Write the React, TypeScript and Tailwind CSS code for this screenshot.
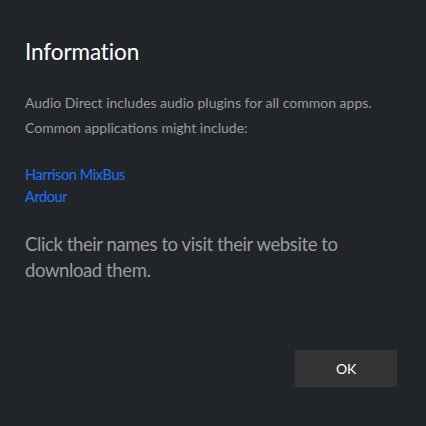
export default function App() {
  return (
    <div className="flex h-[426px] w-[426px] flex-col bg-[#212529] px-[25px] font-['Lato',sans-serif]">
      <h1 className="mt-[36px] text-[22.5px] leading-[32px] tracking-[-0.1px] text-white">Information</h1>
      <p className="mt-[22px] text-[14px] leading-[25px] text-[#9b9b9b]">
        Audio Direct includes audio plugins for all common apps.
        <br />
        Common applications might include:
      </p>
      <div className="mt-[24px] flex flex-col text-[14.5px] leading-[22px] tracking-[-0.4px] text-[#1a73f5]">
        <a>Harrison MixBus</a>
        <a>Ardour</a>
      </div>
      <p className="mt-[23px] text-[18.5px] leading-[26px] tracking-[-0.4px] text-[#9b9b9b]">
        Click their names to visit their website to download them.
      </p>
      <div className="mt-auto mb-[39px] flex justify-end pr-[4px]">
        <button className="h-[37px] w-[102px] bg-[#333333] text-[14px] tracking-[-0.3px] text-white">OK</button>
      </div>
    </div>
  );
}
